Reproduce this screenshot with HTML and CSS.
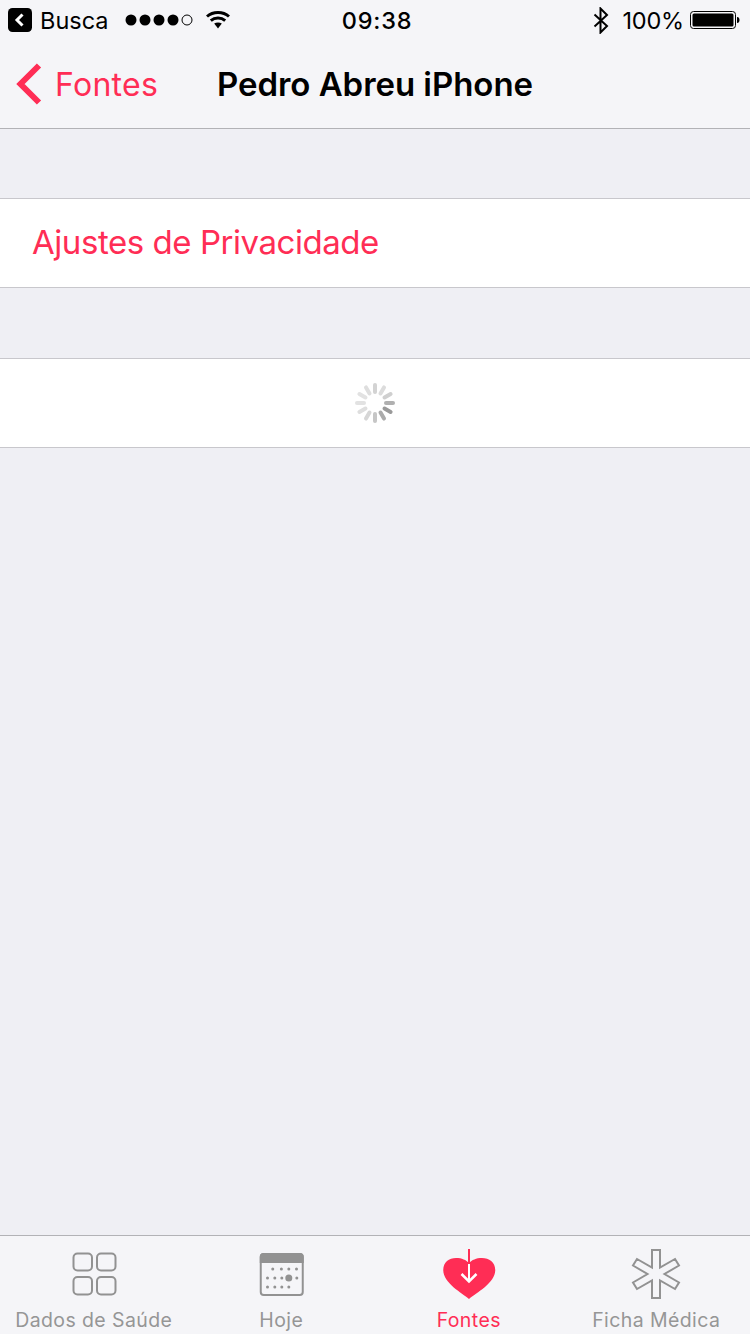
FILE: index.html
```html
<!DOCTYPE html>
<html lang="pt">
<head>
<meta charset="utf-8">
<title>Pedro Abreu iPhone</title>
<link rel="stylesheet" href="styles.css">
</head>
<body>
<div class="screen">
  <header class="top">
    <div class="status">
      <div class="status-left">
        <svg class="back-badge" width="24" height="24" viewBox="0 0 24 24"><rect width="24" height="24" rx="4.5" fill="#000"/><path d="M14.5 6.5 9 12l5.500 5.500" fill="none" stroke="#fff" stroke-width="3"/></svg>
        <span class="busca">Busca</span>
        <svg class="signal" width="68" height="14" viewBox="0 0 68 14"><circle cx="6" cy="7" r="5.5"/><circle cx="20" cy="7" r="5.5"/><circle cx="34" cy="7" r="5.5"/><circle cx="48" cy="7" r="5.5"/><circle cx="62" cy="7" r="5" fill="none" stroke="#000" stroke-width="1"/></svg>
        <svg class="wifi" width="24" height="18" viewBox="0 0 24 18"><path d="M1 5.500C7 .2 17 .2 23 5.500" fill="none" stroke="#000" stroke-width="3"/><path d="M4.800 9.600c4-3.400 10.400-3.400 14.400 0" fill="none" stroke="#000" stroke-width="3"/><path d="M8.200 12.600c2.200-1.500 5.400-1.500 7.600 0L12 17.500z"/></svg>
      </div>
      <div class="time">09:38</div>
      <div class="status-right">
        <svg class="bt" width="16" height="27" viewBox="0 0 16 27"><path d="M1.500 7.500 14 19l-6.500 6.500v-24L14 8 1.500 19.500" fill="none" stroke="#000" stroke-width="2"/></svg>
        <span class="pct">100%</span>
        <svg class="battery" width="50" height="20" viewBox="0 0 50 20"><rect x=".5" y="1.500" width="45" height="17" rx="3" fill="none" stroke="#000"/><rect x="2.500" y="3.500" width="41" height="13" rx="1.500"/><path d="M47 7c2 0 2.500 1.500 2.500 3s-.5 3-2.500 3z"/></svg>
      </div>
    </div>
    <nav class="navbar">
      <a class="nav-back">
        <svg class="chevron" width="28" height="44" viewBox="0 0 28 44"><path d="M25 3.500 6.500 22 25 40.500" fill="none" stroke="#ff2d55" stroke-width="6"/></svg>
        <span>Fontes</span>
      </a>
      <h1 class="nav-title">Pedro Abreu iPhone</h1>
      <div class="nav-side"></div>
    </nav>
  </header>

  <main class="content">
    <section class="cell cell-link">Ajustes de Privacidade</section>
    <section class="cell cell-spinner">
      <svg width="42" height="42" viewBox="-21 -21 42 42" stroke-width="4" stroke-linecap="round">
        <line x1="0" y1="-18" x2="0" y2="-11" stroke="#d3d3d3"/>
        <line x1="0" y1="-18" x2="0" y2="-11" transform="rotate(30)" stroke="#dcdcdc"/>
        <line x1="0" y1="-18" x2="0" y2="-11" transform="rotate(60)" stroke="#cfcfcf"/>
        <line x1="0" y1="-18" x2="0" y2="-11" transform="rotate(90)" stroke="#b0b0b0"/>
        <line x1="0" y1="-18" x2="0" y2="-11" transform="rotate(120)" stroke="#9a9a9a"/>
        <line x1="0" y1="-18" x2="0" y2="-11" transform="rotate(150)" stroke="#ababab"/>
        <line x1="0" y1="-18" x2="0" y2="-11" transform="rotate(180)" stroke="#c6c6c6"/>
        <line x1="0" y1="-18" x2="0" y2="-11" transform="rotate(210)" stroke="#d6d6d6"/>
        <line x1="0" y1="-18" x2="0" y2="-11" transform="rotate(240)" stroke="#dedede"/>
        <line x1="0" y1="-18" x2="0" y2="-11" transform="rotate(270)" stroke="#e2e2e2"/>
        <line x1="0" y1="-18" x2="0" y2="-11" transform="rotate(300)" stroke="#e2e2e2"/>
        <line x1="0" y1="-18" x2="0" y2="-11" transform="rotate(330)" stroke="#dedede"/>
      </svg>
    </section>
  </main>

  <footer class="tabbar">
    <div class="tab">
      <svg class="tab-icon" width="56" height="50" viewBox="0 0 56 50" fill="none" stroke="#929292" stroke-width="2"><rect x="7.500" y="4.500" width="18.500" height="17" rx="4"/><rect x="31" y="4.500" width="18.500" height="17" rx="4"/><rect x="7.500" y="28" width="18.500" height="17.500" rx="4"/><rect x="31" y="28" width="18.500" height="17.500" rx="4"/></svg>
      <span class="tab-label">Dados de Saúde</span>
    </div>
    <div class="tab">
      <svg class="tab-icon" width="56" height="50" viewBox="0 0 56 50" fill="#929292"><rect x="7.750" y="5" width="42" height="41" rx="3" fill="none" stroke="#929292" stroke-width="2"/><path d="M6.750 8a4 4 0 0 1 4-4h36a4 4 0 0 1 4 4v6h-44z"/><circle cx="19.750" cy="20" r="1.500"/><circle cx="28.400" cy="20" r="1.500"/><circle cx="35.800" cy="20" r="1.500"/><circle cx="43.500" cy="20" r="1.500"/><circle cx="14.500" cy="29" r="1.500"/><circle cx="21.800" cy="29" r="1.500"/><circle cx="28.800" cy="29" r="1.500"/><circle cx="35.800" cy="29" r="3.500"/><circle cx="43.800" cy="29" r="1.500"/><circle cx="14.500" cy="38" r="1.500"/><circle cx="21.800" cy="38" r="1.500"/><circle cx="28.800" cy="38" r="1.500"/><circle cx="35.800" cy="38" r="1.500"/></svg>
      <span class="tab-label">Hoje</span>
    </div>
    <div class="tab tab-active">
      <svg class="tab-icon" width="56" height="50" viewBox="0 0 56 50"><path d="M28 50C21 44 2.250 34 2.250 21 2.250 13 8 9 15 9c6 0 10 2 13 5 3-3 7-5 13-5 7 0 13.250 4 13.250 12C54.250 34 35 44 28 50z" fill="#ff2d55"/><path d="M20.500 25l7.500 7.500 7.500-7.500" fill="none" stroke="#fff" stroke-width="2.500"/><path d="M28 0v15" stroke="#ff2d55" stroke-width="2"/><path d="M28 15v17" stroke="#fff" stroke-width="2"/></svg>
      <span class="tab-label">Fontes</span>
    </div>
    <div class="tab">
      <svg class="tab-icon" width="56" height="50" viewBox="0 0 56 50"><path d="M24 1h8v17.500l15-8.500 4 6.500L36.500 25 51 33.500 47 40l-15-8.500V49h-8V31.500L9 40l-4-6.500L19.500 25 5 16.500 9 10l15 8.500z" fill="none" stroke="#929292" stroke-width="2"/></svg>
      <span class="tab-label">Ficha Médica</span>
    </div>
  </footer>
</div>
</body>
</html>
```

FILE: styles.css
```css
* { box-sizing: border-box; }
html, body { margin: 0; padding: 0; }
body { font-family: Inter, "Liberation Sans", sans-serif; }
svg { display: block; flex: none; }

.screen {
  width: 750px;
  height: 1334px;
  display: flex;
  flex-direction: column;
  background: #efeff4;
  overflow: hidden;
}

.top {
  background: #f5f5f8;
  border-bottom: 1px solid #b2b2b6;
  height: 129px;
}

.status {
  height: 40px;
  display: grid;
  grid-template-columns: 1fr auto 1fr;
  align-items: center;
  padding: 0 10px 0 8px;
  color: #000;
  font-size: 23.5px;
}
.status-left, .status-right { display: flex; align-items: center; }
.status-right { justify-content: flex-end; }
.busca { margin-left: 8px; }
.signal { margin-left: 16px; }
.wifi { margin-left: 13px; }
.time { font-weight: 500; letter-spacing: .8px; margin-left: 6px; }
.pct { margin-left: 14px; letter-spacing: -.2px; }
.battery { margin-left: 6px; }

.navbar {
  height: 88px;
  display: grid;
  grid-template-columns: 1fr auto 1fr;
  align-items: center;
}
.nav-back {
  display: flex;
  align-items: center;
  color: #ff2d55;
  font-size: 32px;
  letter-spacing: .3px;
  padding-left: 14px;
}
.nav-back span { margin-left: 13px; }
.nav-title {
  margin: 0;
  font-size: 33px;
  font-weight: 600;
  letter-spacing: -.05px;
  color: #000;
}

.content { flex: 1; padding-top: 69px; }
.cell {
  height: 90px;
  background: #fff;
  border-top: 1px solid #c8c7cc;
  border-bottom: 1px solid #c8c7cc;
}
.cell-link {
  display: flex;
  align-items: center;
  padding: 0 0 3px 32px;
  color: #ff2d55;
  font-size: 33px;
  letter-spacing: -.45px;
}
.cell-spinner {
  margin-top: 70px;
  display: flex;
  align-items: center;
  justify-content: center;
}

.tabbar {
  height: 99px;
  background: #f5f5f8;
  border-top: 1px solid #b2b2b6;
  display: grid;
  grid-template-columns: repeat(4, 1fr);
}
.tab {
  display: flex;
  flex-direction: column;
  align-items: center;
  padding-top: 13px;
  color: #969696;
}
.tab-label {
  margin-top: 9px;
  font-size: 19.5px;
  line-height: 24px;
  letter-spacing: .4px;
  white-space: nowrap;
}
.tab-active { color: #ff2d55; }
```
